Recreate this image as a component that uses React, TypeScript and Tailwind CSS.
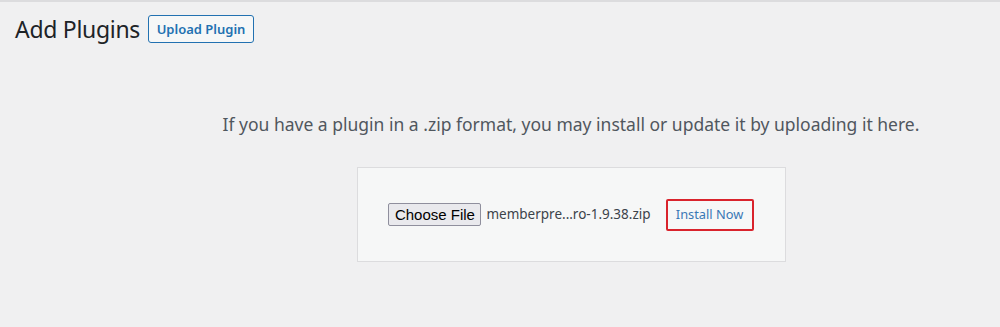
import React from "react";

const seg = { fontFamily: '"Noto Sans", "Open Sans", sans-serif' };

export default function App() {
  return (
    <div className="w-full h-[327px] bg-[#f0f0f1] border-t-2 border-[#dcdcde] overflow-hidden" style={seg}>
      <div className="flex items-center pl-[15px] pt-[13px]">
        <h1 className="text-[23px] leading-[28px] text-[#1d2327] font-normal tracking-[-0.3px]">Add Plugins</h1>
        <button className="ml-[8px] h-[28px] w-[106px] border border-[#2271b1] rounded-[3px] bg-[#f6f7f7] text-[#2271b1] text-[13px] font-semibold leading-none">
          Upload Plugin
        </button>
      </div>
      <div className="ml-[142px] pt-[69px]">
        <p className="text-center text-[17.5px] leading-[24px] text-[#50575e]">
          If you have a plugin in a .zip format, you may install or update it by uploading it here.
        </p>
        <div className="mx-auto mt-[31px] w-[429px] h-[95px] border border-[#dcdcde] bg-[#f6f7f7] flex items-center justify-center">
          <button
            className="h-[23px] w-[93px] border border-[#8f8f9d] rounded-[2px] bg-[#e9e9ed] text-[15px] text-black leading-none"
            style={{ fontFamily: '"Liberation Sans", Arial, sans-serif' }}
          >
            Choose File
          </button>
          <span className="ml-[5px] text-[13.5px] text-[#3c434a]">memberpre...ro-1.9.38.zip</span>
          <div className="ml-[15px] h-[32px] w-[88px] border-2 border-[#d9232c] rounded-[2px] flex items-center justify-center">
            <span className="text-[12.8px] text-[#3a78b5]">Install Now</span>
          </div>
        </div>
      </div>
    </div>
  );
}
